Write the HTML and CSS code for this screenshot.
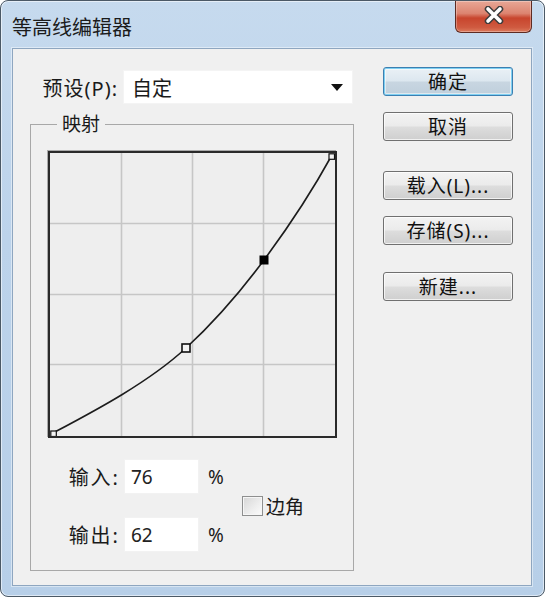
FILE: index.html
```html
<!DOCTYPE html>
<html lang="zh-CN">
<head>
    <meta charset="UTF-8">
    <meta name="viewport" content="width=device-width, initial-scale=1.0">
    <title>等高线编辑器</title>
    <link rel="stylesheet" href="styles.css">
</head>
<body>
    <div class="window">
        <div class="titlebar">
            <span class="title">等高线编辑器</span>
            <div class="close-btn">
                <svg width="22" height="18" viewBox="0 0 22 18">
                    <path d="M5 3 L17 15 M17 3 L5 15" stroke="#3d3d3d" stroke-width="6.5" stroke-linecap="round"/>
                    <path d="M5 3 L17 15 M17 3 L5 15" stroke="#ffffff" stroke-width="3.6" stroke-linecap="round"/>
                </svg>
            </div>
        </div>

        <div class="client">
            <div class="main">
                <div class="preset-row">
                    <label class="preset-label">预设(P):</label>
                    <div class="select">
                        <span>自定</span>
                        <svg class="arrow" width="12" height="8" viewBox="0 0 12 8"><path d="M0 0 H12 L6 7 Z" fill="#111"/></svg>
                    </div>
                </div>

                <fieldset class="mapping">
                    <legend>映射</legend>
                    <div class="graph">
                        <svg width="285" height="283" viewBox="0 0 285 283">
                            <!-- grid -->
                            <path d="M71.5 0 V283 M142.5 0 V283 M213.5 0 V283 M0 70.5 H285 M0 141.5 H285 M0 211.5 H285"
                                  stroke="#c6c6c6" stroke-width="1.6" fill="none"/>
                            <!-- curve -->
                            <path d="M3 280 C43 258.8 98 230 136 195 C162 171 188 142 214 107 C237 76 260 42 282 2"
                                  stroke="#1c1c1c" stroke-width="1.6" fill="none"/>
                            <!-- points -->
                            <rect x="0.8" y="278" width="5.5" height="5.5" fill="#f4f4f4" stroke="#111" stroke-width="1.2"/>
                            <rect x="279" y="0.8" width="5.5" height="5.5" fill="#f4f4f4" stroke="#111" stroke-width="1.2"/>
                            <rect x="132" y="191" width="8" height="8" fill="#f4f4f4" stroke="#111" stroke-width="1.6"/>
                            <rect x="209.5" y="102.5" width="9" height="9" fill="#000"/>
                        </svg>
                    </div>

                    <div class="io">
                        <div class="io-fields">
                            <div class="io-row">
                                <span class="io-label">输入:</span>
                                <div class="num-box">76</div>
                                <span class="pct">%</span>
                            </div>
                            <div class="io-row">
                                <span class="io-label">输出:</span>
                                <div class="num-box">62</div>
                                <span class="pct">%</span>
                            </div>
                        </div>
                        <label class="corner"><span class="checkbox"></span>边角</label>
                    </div>
                </fieldset>
            </div>

            <div class="actions">
                <div class="btn-group">
                    <button class="btn btn-default">确定</button>
                    <button class="btn">取消</button>
                </div>
                <div class="btn-group">
                    <button class="btn">载入(L)...</button>
                    <button class="btn">存储(S)...</button>
                </div>
                <div class="btn-group btn-group-last">
                    <button class="btn">新建...</button>
                </div>
            </div>
        </div>
    </div>
</body>
</html>
```

FILE: styles.css
```css
body {
    margin: 0;
    background: #fff;
    font-family: "Noto Sans", "Noto Sans CJK SC", sans-serif;
    color: #1a1a1a;
}
.window {
    box-sizing: border-box;
    width: 545px;
    height: 597px;
    padding: 0 12px 11px 11px;
    border: 1px solid #4b5966;
    border-radius: 8px;
    background: linear-gradient(to bottom, #c6daee 0%, #bcd3eb 40%, #b7cfe8 100%);
    box-shadow: inset 0 0 0 1px rgba(255, 255, 255, 0.55);
}
.titlebar {
    display: flex;
    justify-content: space-between;
    align-items: flex-start;
    height: 47px;
}
.title {
    margin-top: 14px;
    font-size: 20px;
    line-height: 26px;
    color: #1b1b1b;
}
.close-btn {
    box-sizing: border-box;
    width: 77px;
    height: 32px;
    display: flex;
    align-items: center;
    justify-content: center;
    padding-bottom: 3px;
    border: 1px solid #5e2b22;
    border-top: none;
    border-radius: 0 0 6px 6px;
    background: linear-gradient(to bottom, #e8a796 0%, #dc8470 40%, #c8452d 55%, #cf5a40 85%, #dc7a5c 100%);
    box-shadow: inset 0 0 0 1px rgba(255, 255, 255, 0.3);
}
.client {
    box-sizing: border-box;
    height: 538px;
    display: flex;
    border: 1px solid #8ea6c0;
    background: #f0f0f0;
    box-shadow: 0 0 0 1px rgba(255, 255, 255, 0.45);
}
.main {
    width: 341px;
}
.preset-row {
    display: flex;
    align-items: center;
    margin-top: 21px;
}
.preset-label {
    width: 105px;
    margin-right: 5px;
    text-align: right;
    font-size: 20px;
    letter-spacing: 1px;
}
.select {
    box-sizing: border-box;
    width: 230px;
    height: 34px;
    display: flex;
    align-items: center;
    justify-content: space-between;
    padding: 0 9px 0 8px;
    background: #fff;
    border: 1px solid #f4f4f4;
    font-size: 20px;
}
.arrow {
    margin-top: 1px;
}
.mapping {
    box-sizing: border-box;
    width: 324px;
    margin: 9px 0 0 17px;
    padding: 16px 16px 18px 17px;
    border: 1px solid #a8a8a8;
}
.mapping legend {
    margin-left: 9px;
    padding: 0 5px;
    font-size: 19px;
    line-height: 22px;
}
.graph {
    width: 285px;
    height: 283px;
    border: 2px solid #2a2a2a;
    box-shadow: -1px -1px 0 #aaaaaa;
    background: #eeeeee;
}
.graph svg {
    display: block;
}
.io {
    display: flex;
    align-items: center;
    margin-top: 21px;
}
.io-fields {
    display: flex;
    flex-direction: column;
    gap: 23px;
}
.io-row {
    display: flex;
    align-items: center;
    height: 35px;
    font-size: 19px;
}
.io-label {
    width: 72px;
    margin-right: 4px;
    text-align: right;
    font-size: 20px;
    letter-spacing: 2px;
}
.num-box {
    box-sizing: border-box;
    width: 75px;
    height: 35px;
    padding-left: 6px;
    line-height: 35px;
    background: #fff;
    border: 1px solid #f2f2f2;
    color: #222;
}
.pct {
    width: 27px;
    margin-left: 9px;
}
.corner {
    display: flex;
    align-items: center;
    margin-left: 7px;
    font-size: 19px;
}
.checkbox {
    box-sizing: border-box;
    width: 21px;
    height: 20px;
    margin-right: 3px;
    border: 1px solid #8e8f8f;
    background: linear-gradient(135deg, #d6d6d6 0%, #eeeeee 60%, #fbfbfb 100%);
    box-shadow: inset 0 0 0 1px #f6f6f6;
}
.actions {
    width: 130px;
    margin-left: 29px;
    padding-top: 18px;
}
.btn-group {
    display: flex;
    flex-direction: column;
    gap: 16px;
}
.btn-group + .btn-group {
    margin-top: 30px;
}
.btn-group.btn-group-last {
    margin-top: 27px;
}
.btn {
    box-sizing: border-box;
    width: 130px;
    height: 29px;
    padding: 0;
    border: 1px solid #707070;
    border-radius: 3px;
    background: linear-gradient(to bottom, #f3f3f3 0%, #ebebeb 48%, #dddddd 52%, #cfcfcf 100%);
    box-shadow: inset 0 0 0 1px rgba(255, 255, 255, 0.7);
    font-family: "Noto Sans", "Noto Sans CJK SC", sans-serif;
    font-size: 19px;
    line-height: 26px;
    letter-spacing: 1px;
    color: #111;
}
.btn-default {
    border-color: #3c7fb1;
    background: linear-gradient(to bottom, #eaf1f6 0%, #dce7ef 48%, #c8d6e1 52%, #bfcfdc 100%);
    box-shadow: inset 0 0 0 1px #7fd0f2, inset 0 0 0 2px rgba(255, 255, 255, 0.5);
}
```
